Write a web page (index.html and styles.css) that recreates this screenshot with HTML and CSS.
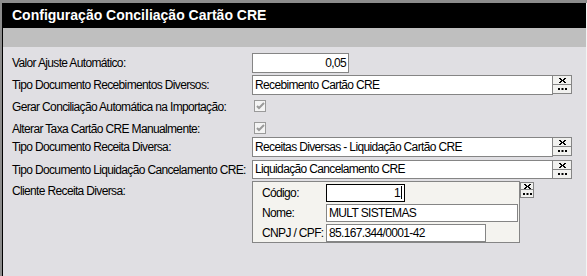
FILE: index.html
```html
<!DOCTYPE html>
<html lang="pt-BR">
<head>
<meta charset="UTF-8">
<title>Configuração Conciliação Cartão CRE</title>
<link rel="stylesheet" href="styles.css">
</head>
<body>
<div class="window">
  <div class="titlebar">Configuração Conciliação Cartão CRE</div>
  <div class="toolbar"></div>

  <div class="form">
    <div class="row row-1">
      <label class="label">Valor Ajuste Automático:</label>
      <div class="field num">0,05</div>
    </div>

    <div class="row row-2">
      <label class="label">Tipo Documento Recebimentos Diversos:</label>
      <div class="field wide">Recebimento Cartão CRE</div>
      <div class="lookup">
        <span class="btn"><svg width="7" height="5" viewBox="0 0 7 5"><path d="M0 0h2v1h1v1h1V1h1V0h2v1H6v1H5v1h1v1h1v1H5V4H4V3H3v1H2v1H0V4h1V3h1V2H1V1H0z" fill="#000"/></svg></span>
        <span class="btn"><svg width="9" height="2" viewBox="0 0 9 2"><path d="M0 0h2v2H0zM3.5 0h2v2h-2zM7 0h2v2H7z" fill="#000"/></svg></span>
      </div>
    </div>

    <div class="row row-3">
      <label class="label">Gerar Conciliação Automática na Importação:</label>
      <span class="check"><svg width="9" height="8" viewBox="0 0 9 8"><path d="M1 4l2 2 5-5" stroke="#9a9a9a" stroke-width="2" fill="none"/></svg></span>
    </div>

    <div class="row row-4">
      <label class="label">Alterar Taxa Cartão CRE Manualmente:</label>
      <span class="check"><svg width="9" height="8" viewBox="0 0 9 8"><path d="M1 4l2 2 5-5" stroke="#9a9a9a" stroke-width="2" fill="none"/></svg></span>
    </div>

    <div class="row row-5">
      <label class="label">Tipo Documento Receita Diversa:</label>
      <div class="field wide">Receitas Diversas - Liquidação Cartão CRE</div>
      <div class="lookup">
        <span class="btn"><svg width="7" height="5" viewBox="0 0 7 5"><path d="M0 0h2v1h1v1h1V1h1V0h2v1H6v1H5v1h1v1h1v1H5V4H4V3H3v1H2v1H0V4h1V3h1V2H1V1H0z" fill="#000"/></svg></span>
        <span class="btn"><svg width="9" height="2" viewBox="0 0 9 2"><path d="M0 0h2v2H0zM3.5 0h2v2h-2zM7 0h2v2H7z" fill="#000"/></svg></span>
      </div>
    </div>

    <div class="row row-6">
      <label class="label">Tipo Documento Liquidação Cancelamento CRE:</label>
      <div class="field wide">Liquidação Cancelamento CRE</div>
      <div class="lookup">
        <span class="btn"><svg width="7" height="5" viewBox="0 0 7 5"><path d="M0 0h2v1h1v1h1V1h1V0h2v1H6v1H5v1h1v1h1v1H5V4H4V3H3v1H2v1H0V4h1V3h1V2H1V1H0z" fill="#000"/></svg></span>
        <span class="btn"><svg width="9" height="2" viewBox="0 0 9 2"><path d="M0 0h2v2H0zM3.5 0h2v2h-2zM7 0h2v2H7z" fill="#000"/></svg></span>
      </div>
    </div>

    <div class="row row-7">
      <label class="label">Cliente Receita Diversa:</label>
      <div class="group">
        <div class="group-row">
          <span class="sublabel">Código:</span>
          <div class="field code num">1<span class="caret"></span></div>
        </div>
        <div class="group-row">
          <span class="sublabel">Nome:</span>
          <div class="field name">MULT SISTEMAS</div>
        </div>
        <div class="group-row">
          <span class="sublabel">CNPJ / CPF:</span>
          <div class="field doc">85.167.344/0001-42</div>
        </div>
      </div>
      <div class="lookup small">
        <span class="btn"><svg width="7" height="5" viewBox="0 0 7 5"><path d="M0 0h2v1h1v1h1V1h1V0h2v1H6v1H5v1h1v1h1v1H5V4H4V3H3v1H2v1H0V4h1V3h1V2H1V1H0z" fill="#000"/></svg></span>
        <span class="btn"><svg width="9" height="2" viewBox="0 0 9 2"><path d="M0 0h2v2H0zM3.5 0h2v2h-2zM7 0h2v2H7z" fill="#000"/></svg></span>
      </div>
    </div>
  </div>
</div>
</body>
</html>
```

FILE: styles.css
```css
body {
  margin: 0;
  padding: 3px 0 0 2px;
  background: #8c8c8c;
  font-family: "Liberation Sans", Arial, sans-serif;
  font-size: 12px;
  color: #000;
}
.window {
  height: 273px;
  border-left: 1px solid #000;
  border-right: 1px solid #f4f4f4;
  background: #e0dfe3;
}
.titlebar {
  height: 25px;
  line-height: 25px;
  padding-left: 9px;
  background: #000;
  color: #fff;
  font-weight: bold;
  font-size: 14px;
}
.toolbar {
  height: 19px;
  background: #bfbfbf;
}
.form {
  padding: 6px 0 0 9px;
  letter-spacing: -0.65px;
}
.row {
  display: flex;
  align-items: flex-start;
}
.label {
  width: 240px;
  line-height: 20px;
  flex-shrink: 0;
  white-space: nowrap;
}
.row-1, .row-2 { height: 22px; }
.row-3 { height: 22px; }
.row-4 { height: 18px; }
.row-5 { height: 23px; }
.row-6 { height: 21px; }
.field {
  box-sizing: border-box;
  height: 20px;
  line-height: 18px;
  padding: 0 2px;
  background: #fff;
  border: 1px solid #858585;
  white-space: nowrap;
}
.row-1 .field { width: 97px; }
.num { text-align: right; }
.wide { width: 301px; }
.row-6 .field { height: 19px; line-height: 17px; }
.lookup {
  display: flex;
  flex-direction: column;
}
.btn {
  box-sizing: border-box;
  width: 19px;
  height: 10px;
  display: flex;
  align-items: center;
  justify-content: center;
  background: #f1f1ef;
  border: 1px solid #858585;
  border-left: 0;
}
.btn + .btn {
  border-top: 0;
  height: 9px;
}
.check {
  box-sizing: border-box;
  width: 12px;
  height: 12px;
  margin: 3px 0 0 2px;
  display: flex;
  align-items: center;
  justify-content: center;
  background: #f4f4f4;
  border: 1px solid #9a9a9a;
}
.group {
  box-sizing: border-box;
  width: 268px;
  height: 62px;
  padding: 2px 0 0 9px;
  background: #f4f3ef;
  border: 1px solid #858585;
}
.group-row {
  display: flex;
  height: 20px;
}
.sublabel {
  width: 64px;
  line-height: 18px;
  white-space: nowrap;
}
.code {
  width: 79px;
  height: 18px;
  line-height: 16px;
  border-color: #000;
}
.caret {
  display: inline-block;
  width: 1px;
  height: 13px;
  margin-left: 1px;
  vertical-align: -2px;
  background: #000;
}
.name { width: 192px; height: 18px; line-height: 16px; }
.doc { width: 160px; height: 18px; line-height: 16px; }
.lookup.small { margin-top: 1px; }
.lookup.small .btn {
  width: 14px;
  height: 8px;
  border-left: 1px solid #858585;
}
.lookup.small .btn + .btn {
  height: 8px;
}
```
